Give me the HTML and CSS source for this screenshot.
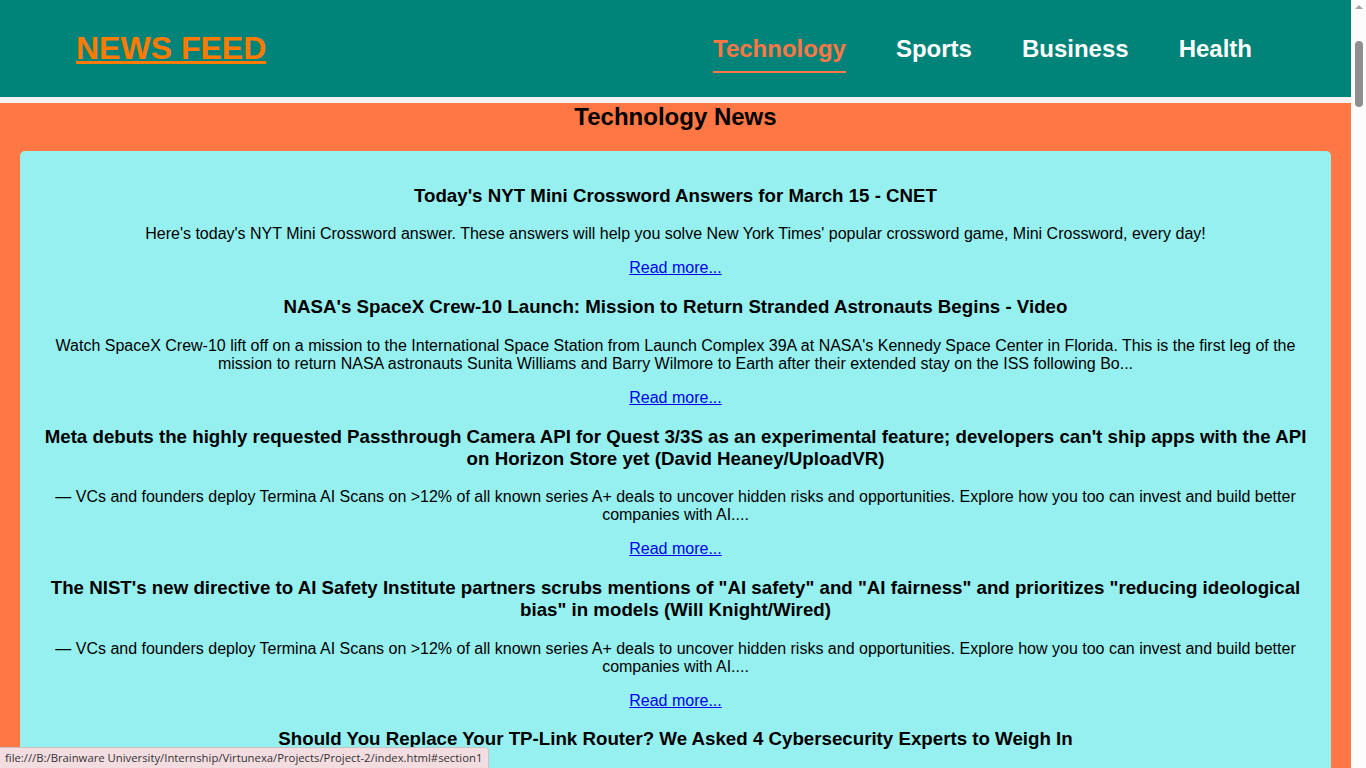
FILE: index.html
```html
<!DOCTYPE html>
<html lang="en">
<head>
<meta charset="utf-8">
<title>News Feed</title>
<link rel="stylesheet" href="styles.css">
</head>
<body>
<header class="site-header">
  <h1 class="logo"><a href="#">NEWS FEED</a></h1>
  <nav class="nav">
    <a class="nav-link active" href="#section1">Technology</a>
    <a class="nav-link" href="#section2">Sports</a>
    <a class="nav-link" href="#section3">Business</a>
    <a class="nav-link" href="#section4">Health</a>
  </nav>
</header>
<main class="section" id="section1">
  <h2 class="section-title">Technology News</h2>
  <div class="card">
    <article class="item">
      <h3>Today's NYT Mini Crossword Answers for March 15 - CNET</h3>
      <p>Here's today's NYT Mini Crossword answer. These answers will help you solve New York Times' popular crossword game, Mini Crossword, every day!</p>
      <p><a href="#">Read more...</a></p>
    </article>
    <article class="item">
      <h3>NASA's SpaceX Crew-10 Launch: Mission to Return Stranded Astronauts Begins - Video</h3>
      <p>Watch SpaceX Crew-10 lift off on a mission to the International Space Station from Launch Complex 39A at NASA's Kennedy Space Center in Florida. This is the first leg of the mission to return NASA astronauts Sunita Williams and Barry Wilmore to Earth after their extended stay on the ISS following Bo...</p>
      <p><a href="#">Read more...</a></p>
    </article>
    <article class="item">
      <h3>Meta debuts the highly requested Passthrough Camera API for Quest 3/3S as an experimental feature; developers can't ship apps with the API on Horizon Store yet (David Heaney/UploadVR)</h3>
      <p>— VCs and founders deploy Termina AI Scans on &gt;12% of all known series A+ deals to uncover hidden risks and opportunities. Explore how you too can invest and build better companies with AI....</p>
      <p><a href="#">Read more...</a></p>
    </article>
    <article class="item">
      <h3>The NIST's new directive to AI Safety Institute partners scrubs mentions of "AI safety" and "AI fairness" and prioritizes "reducing ideological bias" in models (Will Knight/Wired)</h3>
      <p>— VCs and founders deploy Termina AI Scans on &gt;12% of all known series A+ deals to uncover hidden risks and opportunities. Explore how you too can invest and build better companies with AI....</p>
      <p><a href="#">Read more...</a></p>
    </article>
    <article class="item">
      <h3>Should You Replace Your TP-Link Router? We Asked 4 Cybersecurity Experts to Weigh In</h3>
      <p>TP-Link routers are under scrutiny from US officials. We asked cybersecurity experts whether you should be worried about the router in your home.</p>
      <p><a href="#">Read more...</a></p>
    </article>
    <article class="item">
      <h3>Apple's Siri Delay Explained: What Happened to the Smarter Assistant</h3>
      <p>Apple says some of the personalized Siri features it announced last year will take longer to deliver than expected. Here's what we know so far.</p>
      <p><a href="#">Read more...</a></p>
    </article>
  </div>
</main>
<div class="status-bubble">file:///B:/Brainware University/Internship/Virtunexa/Projects/Project-2/index.html#section1</div>
<div class="fake-scrollbar" aria-hidden="true">
  <div class="scroll-arrow"></div>
  <div class="scroll-thumb"></div>
</div>
</body>
</html>
```
FILE: styles.css
```css
html, body {
  margin: 0;
  padding: 0;
}
body {
  background: #f3f3f3;
  font-family: "Liberation Sans", Arial, sans-serif;
  color: #000;
  padding-right: 15px;
}
.site-header {
  background: #008379;
  height: 97px;
  padding: 0 99px 0 76px;
  display: flex;
  align-items: center;
  justify-content: space-between;
  margin-bottom: 6px;
}
.logo {
  margin: 0;
  font-size: 32px;
  font-weight: bold;
}
.logo a {
  color: #ff7b00;
  text-decoration: underline;
}
.nav {
  display: flex;
  gap: 50px;
}
.nav-link {
  color: #fff;
  font-size: 24px;
  font-weight: bold;
  text-decoration: none;
  padding: 10px 0 8px;
  border-bottom: 2px solid transparent;
}
.nav-link.active {
  color: #ff7744;
  border-bottom-color: #ff7744;
}
.section {
  background: #ff7744;
  padding: 0 20px 20px;
}
.section-title {
  margin: 0 0 20px;
  font-size: 24px;
  text-align: center;
}
.card {
  background: #97f0f0;
  border-radius: 5px;
  padding: 15px 20px;
  text-align: center;
}
.item h3 {
  font-size: 18.72px;
  margin: 18.72px 0;
}
.item p {
  font-size: 16px;
  margin: 16px 0;
}
.item a {
  color: #0000ee;
}
.status-bubble {
  position: fixed;
  left: 0;
  bottom: 0;
  background: #f4dde1;
  border: 1px solid #c9c3c4;
  border-left: none;
  border-bottom: none;
  border-top-right-radius: 4px;
  padding: 2px 6px 3px 5px;
  font-family: "Open Sans", "Noto Sans", sans-serif;
  font-size: 11.3px;
  color: #333;
  line-height: 15px;
}
.fake-scrollbar {
  position: fixed;
  top: 0;
  right: 0;
  width: 15px;
  height: 100%;
  background: #fcfcfc;
}
.scroll-arrow {
  width: 0;
  height: 0;
  margin: 5px auto 0;
  border-left: 4px solid transparent;
  border-right: 4px solid transparent;
  border-bottom: 4px solid #a3a3a3;
}
.scroll-thumb {
  width: 8px;
  height: 66px;
  margin: 32px auto 0;
  background: #8f8f8f;
  border-radius: 4px;
}
```
